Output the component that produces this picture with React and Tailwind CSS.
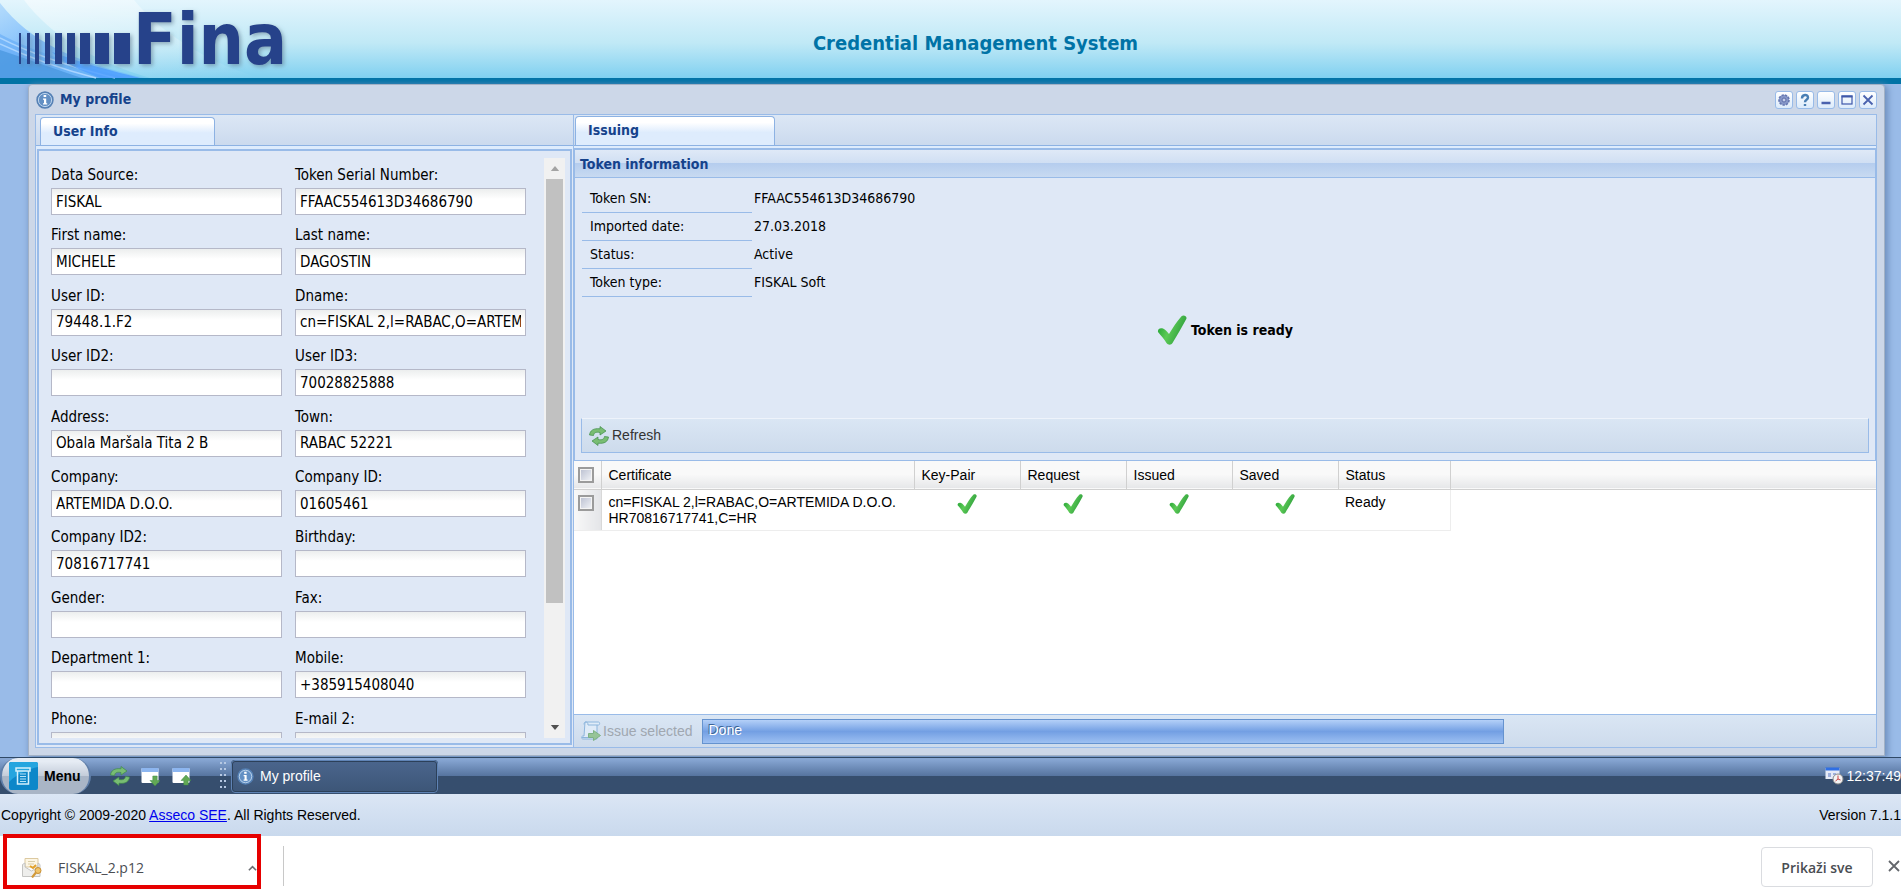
import React from "react";

const fields = [
  { label: "Data Source:", value: "FISKAL" },
  { label: "Token Serial Number:", value: "FFAAC554613D34686790" },
  { label: "First name:", value: "MICHELE" },
  { label: "Last name:", value: "DAGOSTIN" },
  { label: "User ID:", value: "79448.1.F2" },
  { label: "Dname:", value: "cn=FISKAL 2,l=RABAC,O=ARTEMIDA D.O.O." },
  { label: "User ID2:", value: "" },
  { label: "User ID3:", value: "70028825888" },
  { label: "Address:", value: "Obala Maršala Tita 2 B" },
  { label: "Town:", value: "RABAC 52221" },
  { label: "Company:", value: "ARTEMIDA D.O.O." },
  { label: "Company ID:", value: "01605461" },
  { label: "Company ID2:", value: "70816717741" },
  { label: "Birthday:", value: "" },
  { label: "Gender:", value: "" },
  { label: "Fax:", value: "" },
  { label: "Department 1:", value: "" },
  { label: "Mobile:", value: "+385915408040" },
  { label: "Phone:", value: "" },
  { label: "E-mail 2:", value: "" },
];

const tokenInfo = [
  ["Token SN:", "FFAAC554613D34686790"],
  ["Imported date:", "27.03.2018"],
  ["Status:", "Active"],
  ["Token type:", "FISKAL Soft"],
];

const steps = ["Key-Pair", "Request", "Issued", "Saved"];

const bars = [
  [19, 2],
  [27, 3],
  [35, 4],
  [45, 5],
  [55, 7],
  [67, 8],
  [80, 10],
  [95, 14],
  [114, 16],
];

const Logo = () => (
  <svg width="420" height="78" viewBox="0 0 420 78" className="block shrink-0 overflow-visible">
    <defs>
      <linearGradient id="swoosh" x1="0" y1="0" x2="1" y2="1">
        <stop offset="0" stopColor="#b5dcfc" />
        <stop offset="0.45" stopColor="#7cbcfb" />
        <stop offset="1" stopColor="#6cb8fa" stopOpacity="0.5" />
      </linearGradient>
      <linearGradient id="veil" x1="0" y1="0" x2="1" y2="1">
        <stop offset="0" stopColor="#fff" stopOpacity="0.5" />
        <stop offset="1" stopColor="#fff" stopOpacity="0" />
      </linearGradient>
      <filter id="logoShadow" x="-10%" y="-10%" width="125%" height="135%">
        <feDropShadow dx="2" dy="2" stdDeviation="2" floodColor="#5d7a90" floodOpacity="0.6" />
      </filter>
    </defs>
    <path d="M24 0H134C158 30 205 62 260 78H150C95 62 50 35 24 0Z" fill="url(#veil)" />
    <path d="M0 3C30 42 75 62 145 78H0Z" fill="url(#swoosh)" />
    <path d="M0 34C30 50 75 65 128 78H0Z" fill="#5fa8f5" opacity="0.55" />
    <path d="M0 50C30 60 58 70 82 78H0Z" fill="#3f8fd8" opacity="0.6" />
    <path d="M0 38C35 56 75 68 115 78M0 44C30 58 60 69 96 78" stroke="#a9d4ff" strokeWidth="1.5" fill="none" />
    <path d="M52 52C85 64 112 71 140 78H100C80 70 62 62 52 52Z" fill="#4e9dff" opacity="0.8" />
    <g fill="#27428a" filter="url(#logoShadow)">
      {bars.map(([x, w]) => (
        <rect key={x} x={x} y="33" width={w} height="31" />
      ))}
      <text x="133" y="64" fontFamily="'DejaVu Sans Condensed', 'DejaVu Sans', sans-serif" fontWeight="700" fontSize="71">
        Fina
      </text>
    </g>
  </svg>
);

const InfoIcon = ({ className }) => (
  <svg viewBox="0 0 18 18" className={className}>
    <circle cx="9" cy="9" r="8" fill="#6390c4" stroke="#5580b4" strokeWidth="1.4" />
    <circle cx="9" cy="9" r="6.6" fill="none" stroke="#bcd3ec" strokeWidth="1" />
    <path d="M7.6 4h2.6v2H7.6zM7 7.4h3.2v4.8h1v1.4H7v-1.4h1V8.8H7z" fill="#fff" />
  </svg>
);

const CheckIcon = ({ className }) => (
  <svg viewBox="0 0 30 30" className={className}>
    <defs>
      <linearGradient id="tick" x1="0" y1="0" x2="1" y2="0.4">
        <stop offset="0" stopColor="#159a2c" />
        <stop offset="0.5" stopColor="#5cca56" />
        <stop offset="1" stopColor="#2f9f3d" />
      </linearGradient>
    </defs>
    <path
      d="M1 17C0.5 14 3 12.500 6 13.500C8.500 14.500 10 16.500 12 19C16 12.500 20 6 24.500 1.200C26.500 -0.500 30.500 1 29.300 4C25 12 20 20.500 15.500 28C14 30.500 11 30 9.500 28C7 24 4 20.500 1 17Z"
      fill="url(#tick)"
    />
  </svg>
);

const RefreshIcon = ({ className }) => (
  <svg viewBox="0 0 20 20" className={className}>
    <g stroke="#3f8d48" strokeWidth="0.7" fill="#79bd73">
      <path d="M0.500 9C1 4.500 4.500 2 11 2.800V0.500L17 5L11 9V6.500C7 5.800 5 6.500 4.500 9.500Z" />
      <path d="M19.500 11C19 15.500 15.500 18 9 17.200V19.500L3 15L9 11V13.500C13 14.200 15 13.500 15.500 10.500Z" />
    </g>
  </svg>
);

const WindowArrowIcon = ({ up }) => (
  <svg viewBox="0 0 19 20" className="h-5 w-[19px]">
    <rect x="0.500" y="2" width="17" height="15" rx="1" fill="#fff" />
    <rect x="0.500" y="2" width="17" height="4" fill="#8db6f0" />
    {up ? (
      <path d="M14 9l5 5.500h-2.800V19h-4.400v-4.500H9z" fill="#62a855" stroke="#3f8d48" strokeWidth="0.500" />
    ) : (
      <path d="M14 20l-5-5.500h2.800V10h4.400v4.500H19z" fill="#62a855" stroke="#3f8d48" strokeWidth="0.500" />
    )}
  </svg>
);

const IssueIcon = () => (
  <svg viewBox="0 0 20 20" className="h-5 w-5 opacity-70">
    <path d="M4 1h13.500c1.500 0 1.500 3 0 3H16v14H2c-2 0-2-3 0-3h1z" fill="#e4f0fb" stroke="#6fa3d4" />
    <path d="M3 3.500C3 1.500 4 1 5 1s2 .5 2 3h9M1 16.500h10" fill="none" stroke="#6fa3d4" />
    <path d="M7.500 12.500h5V9.500l7 5-7 5v-3h-5z" fill="#7dba72" stroke="#5b9f5a" />
  </svg>
);

const MenuIcon = () => (
  <svg viewBox="0 0 29 28" className="h-7 w-[29px]">
    <rect width="29" height="28" rx="2" fill="#0d87c9" />
    <path d="M0 2C0 1 1 0 2 0h25c1 0 2 1 2 2v3C20 7 9 11 0 20Z" fill="#25a5df" />
    <path d="M7 6h14v3H7zM8.500 9h11v13h-11z" fill="none" stroke="#d4f0fc" strokeWidth="1.500" />
    <path d="M11 12h6M11 14.500h6M11 17h6M11 19.500h6" stroke="#b8e4f8" />
  </svg>
);

const ClockIcon = () => (
  <svg viewBox="0 0 19 18" className="h-[18px] w-[19px]">
    <rect x="0.500" y="1" width="14" height="11" fill="#e6ebf8" />
    <rect x="0.500" y="0.500" width="14" height="3" fill="#2f6fe4" />
    <path d="M3 6h3v4H3zM8 6h3v2H8z" fill="#9fb0dd" />
    <circle cx="13" cy="12" r="5" fill="#f4f4f4" stroke="#8b8b8b" />
    <path d="M13 8.500V12l-2.500 2M13 12l2.500 1" stroke="#c44" fill="none" />
  </svg>
);

const FileIcon = () => (
  <svg viewBox="0 0 20 20" className="h-5 w-5">
    <path d="M3 0.500h13V9H3z" fill="#fdf6e4" stroke="#dcc9a0" />
    <path d="M0.500 6.500L3 5v4l6.500 4L16 9V5l2 1.500V18.500H0.500z" fill="#eeeeec" stroke="#c4c4c2" />
    <path d="M6 3.500h7M6 6h6" stroke="#d9cda9" />
    <path d="M8 8l3 2 3-3" stroke="#e3a22c" strokeWidth="2" fill="none" />
    <circle cx="16" cy="12.500" r="3" fill="#f0c46a" stroke="#c98f31" />
    <path d="M14 14.500L10 19.500" stroke="#d29a3a" strokeWidth="2.200" />
  </svg>
);

const toolIcons = {
  Settings: (
    <>
      <circle cx="8" cy="8" r="5" fill="#8596c8" stroke="#6476b0" strokeWidth="1.600" strokeDasharray="2.400 1" />
      <circle cx="8" cy="8" r="2" fill="#c3cdea" stroke="#5d6ea8" />
    </>
  ),
  Help: (
    <path d="M5 6.500C5 2 11 2 11 5.500C11 8 8 7.500 8 10.200M8 12v2" fill="none" stroke="#4a7fb4" strokeWidth="2.400" />
  ),
  Minimize: <path d="M3.500 11h9" stroke="#4a62ae" strokeWidth="2.500" />,
  Maximize: (
    <>
      <rect x="3" y="4" width="10" height="8" fill="none" stroke="#3f58aa" strokeWidth="1.200" />
      <path d="M2.500 4.500h11" stroke="#3f58aa" strokeWidth="2" />
    </>
  ),
  Close: <path d="M3.500 3.500l9 9M12.500 3.500l-9 9" stroke="#4a62ae" strokeWidth="1.800" />,
};

const Tab = ({ children, className }) => (
  <button
    className={`rounded-t border border-b-0 border-[#8db2e3] bg-linear-to-b from-white from-20% to-[#deecfd] to-55% text-left text-[14px] font-bold text-[#15428b] ${className}`}
  >
    {children}
  </button>
);

const GridCheck = ({ label }) => (
  <input
    type="checkbox"
    aria-label={label}
    className="block h-4 w-4 appearance-none border-2 border-[#9b9b9b] bg-linear-to-br from-[#b9bfd0] to-[#f4f5f8] outline outline-1 -outline-offset-3 outline-[#f4f4f4]"
  />
);

const UserInfo = () => (
  <section className="flex w-[538px] shrink-0 flex-col border-r border-[#99bbe8] bg-[#dfe8f6]">
    <div className="flex h-[31px] items-end border-b border-[#8db2e3] bg-linear-to-b from-[#dce7f5] to-[#cbdaee] pl-1">
      <Tab className="h-7 w-[175px] pl-3">User Info</Tab>
    </div>
    <div className="h-[3px] bg-[#deecfd]" />
    <div className="mr-px mb-0.5 ml-px flex grow border-2 border-[#99bbe8] pt-[7px] pr-[5px] pb-[5px] pl-3">
      <div className="grid h-[580px] min-w-0 grow overflow-hidden">
        <div className="grid h-[607px] grid-cols-2 grid-rows-10 gap-x-[13px] pt-[3px] pr-[18px]">
          {fields.map(({ label, value }) => (
            <label key={label} className="flex min-w-0 flex-col gap-[3px] pt-1 text-[15px] leading-5">
              {label}
              <input
                defaultValue={value}
                className="h-[27px] w-full border border-[#b5b8c8] bg-linear-to-b from-[#eceeee] to-white to-40% px-1 text-[15px] outline-none"
              />
            </label>
          ))}
        </div>
      </div>
      <div className="flex h-[580px] w-[21px] shrink-0 flex-col items-center bg-[#f1f1f1]">
        <svg viewBox="0 0 10 6" className="my-2 h-[5px] w-[10px]">
          <path d="M5 0l5 6H0z" fill="#a3a3a3" />
        </svg>
        <div className="h-[424px] w-[17px] bg-[#c1c1c1]" />
        <svg viewBox="0 0 10 6" className="mt-auto mb-2 h-[5px] w-[10px]">
          <path d="M5 6L0 0h10z" fill="#505050" />
        </svg>
      </div>
    </div>
  </section>
);

const Issuing = () => (
  <section className="flex min-w-0 grow flex-col bg-white">
    <div className="flex h-[31px] items-end border-b border-[#8db2e3] bg-linear-to-b from-[#dce7f5] to-[#cbdaee] pl-px">
      <Tab className="h-[29px] w-[200px] pb-0.5 pl-3">Issuing</Tab>
    </div>
    <div className="h-0.5 bg-[#deecfd]" />
    <div className="flex flex-col border border-t-2 border-[#99bbe8] bg-[#dfe8f6]">
      <h2 className="h-7 border-b border-[#99bbe8] bg-[linear-gradient(#dfe9f7,#d0dff3_48%,#b5cdee_50%,#c8daf1)] pl-[5px] text-[14px] leading-7 font-bold text-[#15428b]">
        Token information
      </h2>
      <dl className="mt-[7px] ml-[7px] text-[14px] leading-[27px]">
        {tokenInfo.map(([name, value]) => (
          <div key={name} className="flex">
            <dt className="w-[170px] border-b border-[#99bbe8] pl-2">{name}</dt>
            <dd className="pl-0.5">{value}</dd>
          </div>
        ))}
      </dl>
      <div className="mt-[18px] flex items-center justify-center gap-1 text-[14px] font-bold">
        <CheckIcon className="h-[30px] w-[30px]" />
        Token is ready
      </div>
      <div className="mx-[6px] mt-[73px] mb-[7px] flex h-[35px] items-center border border-t-[#eef3fb] border-[#99bbe8] bg-linear-to-b from-[#dae6f4] to-[#cddbec] px-[7px] font-[Liberation_Sans,sans-serif]">
        <button className="flex items-center gap-[3px] text-[14px] text-[#333]">
          <RefreshIcon className="h-5 w-5" />
          Refresh
        </button>
      </div>
    </div>
    <table className="w-full table-fixed border-collapse text-left font-[Liberation_Sans,sans-serif] text-[14px] leading-4">
      <colgroup>
        <col className="w-[27px]" />
        <col className="w-[313px]" />
        {steps.map((step) => (
          <col key={step} className="w-[106px]" />
        ))}
        <col className="w-[112px]" />
        <col />
      </colgroup>
      <thead>
        <tr className="h-7 border-b border-[#d0d0d0] bg-linear-to-b from-[#f9f9f9] from-50% to-[#e6e7e9]">
          <th className="border-r border-[#d0d0d0] pl-1">
            <GridCheck label="Select all certificates" />
          </th>
          {["Certificate", ...steps, "Status"].map((head) => (
            <th key={head} className="border-r border-[#d0d0d0] pl-[7px] font-normal">
              {head}
            </th>
          ))}
          <th aria-hidden="true" />
        </tr>
      </thead>
      <tbody>
        <tr className="h-[41px] align-top">
          <td className="border-r border-b border-[#d8d8d8] border-b-[#ededed] bg-linear-to-r from-[#f8f8f8] to-[#e4e5e8] pt-[5px] pl-1">
            <GridCheck label="Select certificate" />
          </td>
          <td className="border-b border-[#ededed] pt-1 pl-[7px]">
            cn=FISKAL 2,l=RABAC,O=ARTEMIDA D.O.O.
            <br />
            HR70816717741,C=HR
          </td>
          {steps.map((step) => (
            <td key={step} className="border-b border-[#ededed] pt-1">
              <CheckIcon className="mx-auto h-5 w-5" />
            </td>
          ))}
          <td className="border-r border-b border-[#ededed] pt-1 pl-[7px]">Ready</td>
          <td />
        </tr>
      </tbody>
    </table>
    <div className="mt-auto flex h-[33px] items-center border-t border-[#99bbe8] bg-linear-to-b from-[#dae6f4] to-[#cddbec] pl-[7px] font-[Liberation_Sans,sans-serif] text-[14px]">
      <button disabled className="mr-[9px] flex shrink-0 items-center gap-0.5 text-[#a0a7b0]">
        <IssueIcon />
        Issue selected
      </button>
      <div
        role="progressbar"
        aria-valuenow={100}
        className="h-[25px] w-[62%] border border-[#6593cf] bg-linear-to-b from-[#b4d0f8] via-[#739fe3] via-50% to-[#9dc0f2] pl-[6px] leading-5 text-white [text-shadow:-1px_-1px_0_#396295]"
      >
        Done
      </div>
    </div>
  </section>
);

const Taskbar = () => (
  <nav className="flex h-[37px] items-center border-t border-[#2f4967] bg-linear-to-b from-[#86a5d2] from-5% via-[#56749f] via-50% to-[#364e6e] to-50% font-[Liberation_Sans,sans-serif] text-[14px] text-white">
    <button className="flex h-full w-[91px] shrink-0 items-center gap-[6px] rounded-[18px] border-x-2 border-[#5f7ea8] bg-linear-to-b from-[#e6ecf4] from-10% via-[#c3ccd9] via-50% to-[#a9b5c6] to-50% pl-[7px] font-bold text-black">
      <MenuIcon />
      Menu
    </button>
    <button aria-label="Refresh" className="ml-[19px]">
      <RefreshIcon className="h-5 w-5" />
    </button>
    <button aria-label="Minimize all" className="ml-[11px]">
      <WindowArrowIcon />
    </button>
    <button aria-label="Restore all" className="ml-3">
      <WindowArrowIcon up />
    </button>
    <svg viewBox="0 0 8 30" className="mr-1 ml-7 h-[30px] w-2">
      {[2, 8, 14, 20, 26].map((y) => (
        <path key={y} d={`M1 ${y}h2M5 ${y}h2`} stroke="#b6c8e2" strokeWidth="2" />
      ))}
    </svg>
    <button className="flex h-[33px] w-[207px] items-center gap-[6px] rounded-sm border-2 border-[#2c4059] bg-linear-to-b from-[#4a658c] to-[#3d5678] pl-1 outline outline-1 -outline-offset-1 outline-[#5f83b5]">
      <InfoIcon className="h-[17px] w-[17px]" />
      My profile
    </button>
    <div className="ml-auto flex shrink-0 items-center gap-[3px]">
      <ClockIcon />
      12:37:49
    </div>
  </nav>
);

const App = () => {
  return (
    <div className="min-h-screen overflow-hidden bg-white font-[DejaVu_Sans_Condensed,DejaVu_Sans,sans-serif] text-black">
      <header className="flex h-[84px] items-center border-b-[6px] border-[#0073a6] bg-linear-to-b from-[#e3f5fd] via-[#c0e9f6] via-55% to-[#7fd0f0]">
        <Logo />
        <h1 className="grow pt-2 pr-[370px] text-center text-[20px] leading-6 font-bold text-[#0073a6]">
          Credential Management System
        </h1>
      </header>

      <main className="bg-[#99bbe8] pr-4 pb-px pl-7">
        <div className="rounded-t border border-[#a2b1c5] bg-[#ccd7e8] pr-[7px] pb-[7px] pl-[6px] shadow-[2px_2px_6px_1px_#6f8fbd]">
          <div className="flex h-[29px] items-center pl-px">
            <InfoIcon className="h-[18px] w-[18px]" />
            <h2 className="ml-[6px] text-[14px] font-bold text-[#15428b]">My profile</h2>
            <div className="ml-auto flex gap-[3px]">
              {Object.entries(toolIcons).map(([name, icon]) => (
                <button
                  key={name}
                  aria-label={name}
                  className="h-[18px] w-[18px] rounded-[3px] border border-[#99bbe8] bg-linear-to-b from-white to-[#dcebfb]"
                >
                  <svg viewBox="0 0 16 16" className="block h-4 w-4">
                    {icon}
                  </svg>
                </button>
              ))}
            </div>
          </div>
          <div className="flex border border-[#99bbe8]">
            <UserInfo />
            <Issuing />
          </div>
        </div>
      </main>

      {/* keeps the window shadow behind the bar */}
      <div className="relative">
        <Taskbar />
      </div>

      <footer className="flex h-[42px] items-center justify-between bg-linear-to-b from-[#dbe6f5] to-[#c9d9ed] pl-px font-[Liberation_Sans,sans-serif] text-[14px]">
        <p>
          Copyright © 2009-2020{" "}
          <a href="#" className="text-[#0000ee] underline">
            Asseco SEE
          </a>
          . All Rights Reserved.
        </p>
        <p className="shrink-0">Version 7.1.1</p>
      </footer>

      <div className="flex items-start font-[Open_Sans,sans-serif]">
        <button className="-mt-0.5 ml-[3px] flex h-[55px] w-[258px] items-center border-4 border-[#e60000] pt-3 pl-[15px] text-[14px] text-[#4a4d52]">
          <FileIcon />
          <span className="ml-4">FISKAL_2.p12</span>
          <svg viewBox="0 0 10 6" className="ml-auto h-[6px] w-[9px]">
            <path d="M1 5.500l4-4 4 4" fill="none" stroke="#6b6e73" strokeWidth="1.800" />
          </svg>
        </button>
        <div className="mt-[10px] ml-[22px] h-10 w-px bg-[#c8c8c8]" />
        <button className="mt-[11px] ml-auto h-10 w-[112px] rounded border border-[#dadce0] text-[14px] font-semibold text-[#4a4d52]">
          Prikaži sve
        </button>
        <button aria-label="Close" className="mt-[24px] mr-px ml-[15px]">
          <svg viewBox="0 0 12 12" className="block h-3 w-3">
            <path d="M1 1l10 10M11 1L1 11" stroke="#63666b" strokeWidth="1.800" />
          </svg>
        </button>
      </div>
    </div>
  );
};

export default App;
